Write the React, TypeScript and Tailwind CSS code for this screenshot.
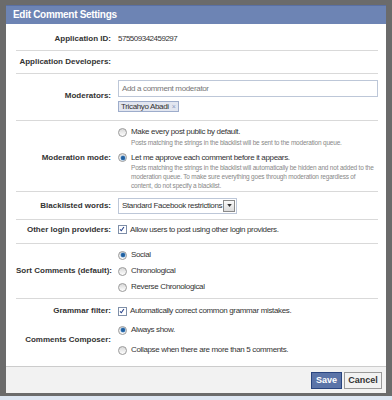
import React from "react";

const Radio = ({ checked }: { checked?: boolean }) => (
  <span className="relative inline-block w-[9px] h-[9px] rounded-full border border-[#9a9a9a] bg-[linear-gradient(#d8d8d8,#ffffff)] shrink-0">
    {checked && (
      <span className="absolute left-[1.5px] top-[1.5px] w-[4px] h-[4px] rounded-full bg-[#1f5f9f] shadow-[0_0_0_0.5px_#6a9fd4]" />
    )}
  </span>
);

const Check = () => (
  <span className="relative inline-block w-[9px] h-[9px] border border-[#7f8fa8] bg-white shrink-0">
    <svg viewBox="0 0 9 9" className="absolute left-0 top-0 w-[7px] h-[7px]">
      <path d="M1.3 4.2 L3 6.1 L6.3 1.3" fill="none" stroke="#25418a" strokeWidth="1.4" />
    </svg>
  </span>
);

const Label = ({ children }: { children?: React.ReactNode }) => (
  <div className="w-[95px] shrink-0 text-right font-bold text-[#333] text-[8px] leading-[10px] whitespace-nowrap">
    {children}
  </div>
);

const Line = () => <div className="h-px bg-[#d9d9d9]" />;

const Opt = ({ children, checked, h = "h-[12px]" }: { children: React.ReactNode; checked?: boolean; h?: string }) => (
  <div className={`flex items-center gap-[4px] ${h}`}>
    <Radio checked={checked} />
    <span className="text-[8px] tracking-[-0.35px] text-[#333] leading-[10px] whitespace-nowrap">{children}</span>
  </div>
);

export default function App() {
  return (
    <div className="w-[392px] h-[400px] bg-[#6b6b6b] flex flex-col" style={{ fontFamily: '"Liberation Sans", Arial, sans-serif' }}>
      <div className="h-[396px] pl-[6px] pt-[5px] pr-[6px]">
        <div className="w-[380px] h-[388px] bg-white flex flex-col">
          <div className="h-[19px] bg-[#6d84b4] border-t border-[#5a70a3] flex items-center pl-[7px]">
            <span className="text-white font-bold text-[10px] tracking-[-0.3px] leading-none">Edit Comment Settings</span>
          </div>
          <div className="flex-1 pl-[10px] pr-[8px] flex flex-col">
            {/* App ID */}
            <div className="h-[26px] pt-[4px] flex items-center gap-[7px]">
              <Label>Application ID:</Label>
              <span className="text-[8px] tracking-[-0.5px] text-[#333] leading-[10px]">575509342459297</span>
            </div>
            <Line />
            <div className="h-[22px] flex items-center gap-[7px]">
              <Label>Application Developers:</Label>
            </div>
            <Line />
            {/* Moderators */}
            <div className="pt-[6px] pb-[8px] flex items-center gap-[7px]">
              <Label>Moderators:</Label>
              <div className="flex-1 flex flex-col gap-[4px]">
                <div className="h-[17px] border border-[#bdc7d8] flex items-center pl-[3px]">
                  <span className="text-[8px] tracking-[-0.35px] text-[#777] leading-none">Add a comment moderator</span>
                </div>
                <div className="flex">
                  <div className="h-[11px] px-[2px] border border-[#9daccb] bg-[#e2e6f0] flex items-center gap-[3px]">
                    <span className="text-[8px] tracking-[-0.35px] text-[#333] leading-none">Tricahyo Abadi</span>
                    <span className="text-[7px] text-[#8a9ac0] leading-none">×</span>
                  </div>
                </div>
              </div>
            </div>
            <Line />
            {/* Moderation mode */}
            <div className="pt-[5px] pb-[1px] flex flex-col">
              <div className="flex gap-[7px]">
                <Label />
                <div className="flex flex-col">
                  <Opt>Make every post public by default.</Opt>
                  <div className="pl-[13px] text-[6.5px] tracking-[-0.2px] leading-[9px] text-[#888] whitespace-nowrap">
                    Posts matching the strings in the blacklist will be sent to the moderation queue.
                  </div>
                </div>
              </div>
              <div className="flex gap-[7px] mt-[5px]">
                <div className="h-[11px] flex items-center">
                  <Label>Moderation mode:</Label>
                </div>
                <div className="flex flex-col">
                  <Opt checked h="h-[11px]">Let me approve each comment before it appears.</Opt>
                  <div className="pl-[13px] text-[6.5px] tracking-[-0.2px] leading-[9px] text-[#888] whitespace-nowrap">
                    Posts matching the strings in the blacklist will automatically be hidden and not added to the
                    <br />
                    moderation queue. To make sure everything goes through moderation regardless of
                    <br />
                    content, do not specify a blacklist.
                  </div>
                </div>
              </div>
            </div>
            <Line />
            {/* Blacklist */}
            <div className="h-[27px] flex items-center gap-[7px]">
              <Label>Blacklisted words:</Label>
              <div className="h-[16px] w-[119px] border border-[#bdc7d8] flex items-center justify-between pl-[3px] pr-[1px]">
                <span className="text-[8px] tracking-[-0.35px] text-[#333] leading-none whitespace-nowrap">Standard Facebook restrictions</span>
                <span className="w-[12px] h-[12px] border border-[#8a8a8a] bg-[linear-gradient(#fafafa,#dcdcdc)] flex items-center justify-center">
                  <svg viewBox="0 0 6 4" className="w-[5px] h-[3px]"><path d="M0 0 H6 L3 4 Z" fill="#333" /></svg>
                </span>
              </div>
            </div>
            <Line />
            <div className="h-[23px] pb-[4px] flex items-center gap-[7px]">
              <Label>Other login providers:</Label>
              <div className="flex items-center gap-[3px]">
                <Check />
                <span className="text-[8px] tracking-[-0.35px] text-[#333] leading-[10px]">Allow users to post using other login providers.</span>
              </div>
            </div>
            <Line />
            {/* Sort */}
            <div className="pt-[3px] pb-[3px] flex items-center gap-[7px]">
              <Label>Sort Comments (default):</Label>
              <div className="flex flex-col">
                <Opt checked h="h-[16px]">Social</Opt>
                <Opt h="h-[16px]">Chronological</Opt>
                <Opt h="h-[16px]">Reverse Chronological</Opt>
              </div>
            </div>
            <Line />
            <div className="pt-[4px] flex items-center gap-[7px] h-[16px] box-content">
              <Label>Grammar filter:</Label>
              <div className="flex items-center gap-[3px]">
                <Check />
                <span className="text-[8px] tracking-[-0.35px] text-[#333] leading-[10px]">Automatically correct common grammar mistakes.</span>
              </div>
            </div>
            <div className="pt-[5px] flex items-center gap-[7px]">
              <Label>Comments Composer:</Label>
              <div className="flex flex-col gap-[8px]">
                <Opt checked>Always show.</Opt>
                <Opt>Collapse when there are more than 5 comments.</Opt>
              </div>
            </div>
          </div>
          <div className="h-[27px] border-t border-[#cccccc] bg-[#f2f2f2] flex items-center justify-end gap-[2px] pr-[4px]">
            <button className="h-[17px] w-[31px] bg-[#5b74a8] border border-[#29447e] text-white font-bold text-[9px] leading-none">Save</button>
            <button className="h-[17px] w-[38px] bg-[#f2f2f2] border border-[#999999] text-[#333] font-bold text-[9px] leading-none">Cancel</button>
          </div>
        </div>
      </div>
      <div className="flex-1 bg-[#dde6f2]" />
    </div>
  );
}
